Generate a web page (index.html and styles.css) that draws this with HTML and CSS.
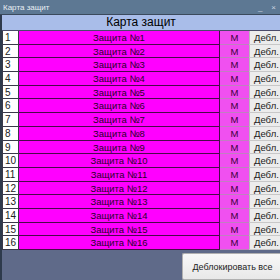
FILE: index.html
```html
<!DOCTYPE html>
<html lang="ru">
<head>
  <meta charset="UTF-8" />
  <title>Карта защит</title>
  <link rel="stylesheet" href="styles.css">
</head>
<body>
  <div class="window">
    <div class="titlebar">
      <span class="title">Карта защит</span>
      <span class="controls"><span>_</span><span>×</span></span>
    </div>
    <div class="content">
      <div class="header">Карта защит</div>
      <div class="rows" id="rows"></div>
      <div class="footer">
        <button class="unlock-all">Деблокировать все</button>
      </div>
    </div>
  </div>

  <script>
    let rows = document.getElementById('rows');
    for (let i = 1; i <= 16; i++) {
      let row = document.createElement('div');
      row.className = 'row';
      row.innerHTML =
        '<div class="num">' + i + '</div>' +
        '<div class="name">Защита №' + i + '</div>' +
        '<div class="mode">М</div>' +
        '<div class="unlock">Дебл.</div>';
      rows.appendChild(row);
    }
  </script>
</body>
</html>
```

FILE: styles.css
```css
body {
  margin: 0;
  width: 280px;
  height: 280px;
  overflow: hidden;
  background: #5f6a89;
  font-family: "Liberation Sans", Arial, sans-serif;
}
.window {
  width: 280px;
  height: 280px;
  display: flex;
  flex-direction: column;
}
.titlebar {
  height: 14px;
  background: #5d7893;
  color: #e8eef4;
  font-size: 8px;
  display: flex;
  align-items: center;
  justify-content: space-between;
  padding: 0 4px 0 3px;
  border-bottom: 1px solid #3b4a5c;
}
.controls span {
  margin-left: 9px;
  color: #c8d4e0;
}
.content {
  flex: 1;
  border-left: 2px solid #2e3a4c;
  background: #5f6a89;
  display: flex;
  flex-direction: column;
}
.header {
  height: 15px;
  line-height: 15px;
  background: #a9bde9;
  text-align: center;
  font-size: 12px;
  color: #000;
  border-bottom: 1px solid #4a4a6a;
}
.row {
  display: flex;
  height: 13.7px;
  font-size: 9.5px;
  line-height: 13px;
}
.num {
  width: 13px;
  background: #fff;
  border: 1px solid #3a3a4a;
  border-top: none;
  padding-left: 2px;
  font-size: 10px;
  color: #222;
}
.name {
  width: 200px;
  background: #ff00ff;
  border-bottom: 1px solid #4a0a4a;
  border-right: 1px solid #4a0a4a;
  text-align: center;
  color: #2a002a;
}
.mode {
  width: 29px;
  background: #f050f0;
  border-bottom: 1px solid #c080c0;
  text-align: center;
  color: #3a003a;
}
.unlock {
  flex: 1;
  background: #ececec;
  border-left: 1px solid #b8b8b8;
  border-bottom: 1px solid #c8c8c8;
  padding-left: 4px;
  color: #222;
}
.footer {
  flex: 1;
  display: flex;
  justify-content: flex-end;
  padding-top: 3px;
}
.unlock-all {
  width: 98px;
  height: 27px;
  padding: 0 0 0 2px;
  background: linear-gradient(#f8f8f8, #e8e8e8);
  border: 1px solid #b0b0b0;
  border-right: none;
  border-radius: 2px 0 0 2px;
  font-family: "Liberation Sans", Arial, sans-serif;
  font-size: 9px;
  color: #222;
}
```
